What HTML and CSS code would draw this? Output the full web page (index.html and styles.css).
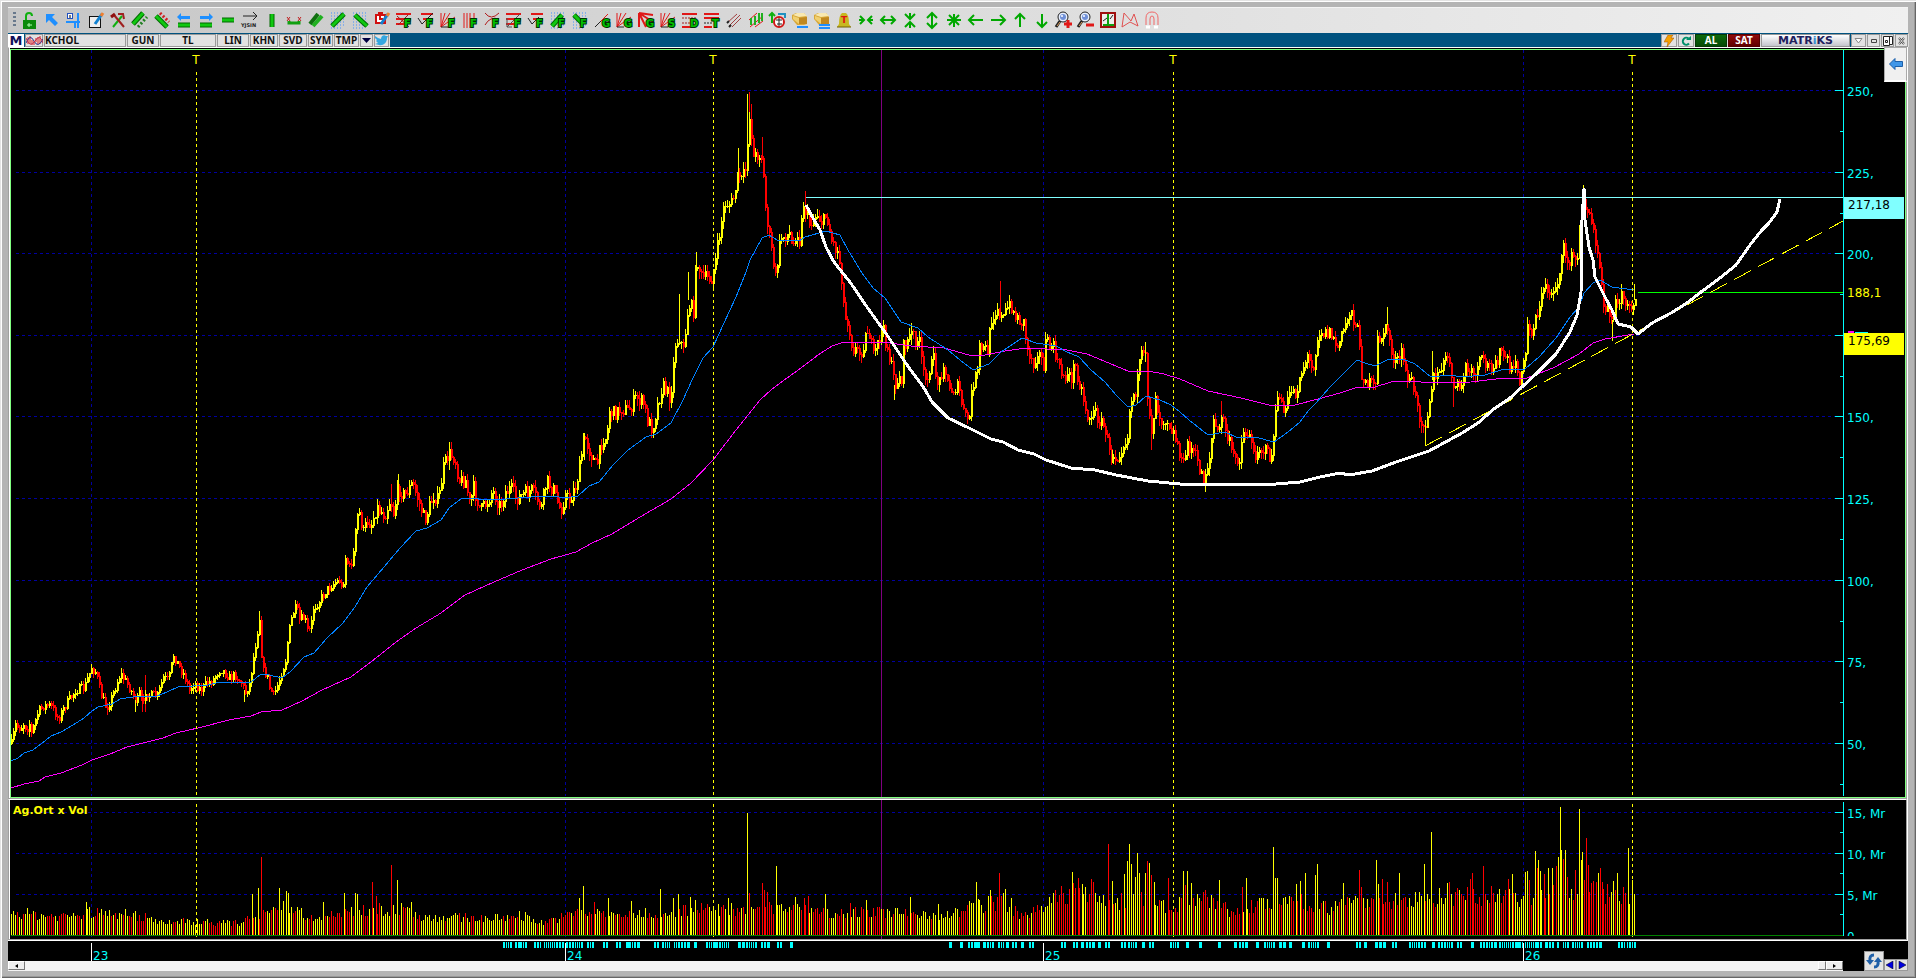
FILE: index.html
```html
<!DOCTYPE html>
<html lang="tr">

<head>
    <meta charset="UTF-8">
    <meta name="viewport" content="width=device-width, initial-scale=1.0">
    <title>KCHOL</title>
    <link rel="stylesheet" href="styles.css">
</head>

<body>
    <div class="window">
        <div class="toolbar" id="toolbar">
            <span class="grip"></span>
        </div>

        <div class="title-bar">
            <span class="logo">M</span>
            <button class="tb wave" aria-label="Indicator">
                <svg width="17" height="12" viewBox="0 0 17 12">
                    <path d="M2 2v7M4 1v8M6 5v5M8 6v4M10 3v4M12 2v7M14 1v8" stroke="#e02020" />
                    <path d="M0 8Q4 -2 8 6T17 4" fill="none" stroke="#303090" />
                    <path d="M0 3Q4 14 9 6T17 8" fill="none" stroke="#c03050" />
                </svg>
            </button>
            <button class="tb symbol">KCHOL</button>
            <button class="tb w32">GUN</button>
            <button class="tb w56">TL</button>
            <button class="tb w32">LIN</button>
            <button class="tb w28">KHN</button>
            <button class="tb w28">SVD</button>
            <button class="tb w25">SYM</button>
            <button class="tb w25">TMP</button>
            <button class="tb w13" aria-label="Template list">
                <svg width="9" height="5" viewBox="0 0 9 5"><path d="M0 0h9L4.500 5z" fill="#000040" /></svg>
            </button>
            <button class="tb w15" aria-label="Twitter">
                <svg width="13" height="11" viewBox="0 0 13 11">
                    <path d="M0 1l3 2 3 1c0-3 3-5 5-3l2-0-1 2c0 5-4 8-8 7l-4-1 3-1-2-2 1-1-2-2z" fill="#35a7e0" />
                </svg>
            </button>
            <span class="spacer"></span>
            <button class="tb w16" aria-label="Fast order">
                <svg width="10" height="12" viewBox="0 0 10 12"><path d="M4 0h5L7 3h3L3 12l1-5H0z" fill="#f5a000" stroke="#a05000" stroke-width=".5" /></svg>
            </button>
            <button class="tb w16" aria-label="Reload">
                <svg width="10" height="10" viewBox="0 0 10 10"><path d="M8 7.500A3.500 3.500 0 1 1 7.500 2.500" fill="none" stroke="#00906a" stroke-width="2" /><path d="M5 4h5V0z" fill="#00906a" /></svg>
            </button>
            <button class="tb buy">AL</button>
            <button class="tb sell">SAT</button>
            <span class="brand">MATR<i>i</i>KS</span>
            <button class="tb w15" aria-label="Menu">
                <svg width="9" height="6" viewBox="0 0 9 6"><path d="M1 .5h7L4.500 5z" fill="#fff" stroke="#888" /></svg>
            </button>
            <button class="tb w13" aria-label="Minimize">
                <svg width="6" height="5" viewBox="0 0 6 5"><path d="M.5 1.500h5v3h-5z" fill="none" stroke="#444" /></svg>
            </button>
            <button class="tb w13" aria-label="Restore">
                <svg width="10" height="10" viewBox="0 0 10 10"><path d="M4 .5h5.500v8H7M.5 .5h6v9h-6zM2.500 4.500h2v2h-2z" fill="#fff" stroke="#222" /></svg>
            </button>
            <button class="tb w13" aria-label="Close">
                <svg width="7" height="8" viewBox="0 0 7 8"><path d="M1 1l5 6M6 1L1 7" stroke="#444" stroke-width="2" /><path d="M1 1l5 6M6 1L1 7" stroke="#fff" stroke-width=".8" /></svg>
            </button>
        </div>

        <div class="panel price-panel">
            <svg class="plot" id="price-plot"></svg>
            <svg class="axis" id="price-axis"></svg>
            <button class="side-toggle" aria-label="Open side panel">
                <svg width="14" height="12" viewBox="0 0 14 12"><path d="M.5 6L6 .5v3h7.500v5H6v3z" fill="#3f96e8" stroke="#1c5fa8" /></svg>
            </button>
        </div>

        <div class="panel volume-panel">
            <svg class="plot" id="volume-plot"></svg>
            <svg class="axis clip" id="volume-axis"></svg>
        </div>

        <div class="bottom">
            <div class="time-area">
                <svg class="timeline" id="timeline"></svg>
                <div class="scrollbar">
                    <button class="scroll-btn" aria-label="Scroll left"><svg width="3" height="4"><path d="M3 0v4L0 2z" /></svg></button>
                    <span class="spacer"></span>
                    <span class="thumb"></span>
                    <button class="scroll-btn" aria-label="Scroll right"><svg width="3" height="4"><path d="M0 0v4l3-2z" /></svg></button>
                </div>
            </div>
            <div class="corner">
                <button class="sync" aria-label="Refresh">
                    <svg width="16" height="16" viewBox="0 0 16 16">
                        <path d="M8 2Q3 2 4 8M8 14q5 0 4-6" fill="none" stroke="#2060a8" stroke-width="3" />
                        <path d="M0 7h8l-4 5zM8 9h8l-4-5z" fill="#2060a8" />
                    </svg>
                </button>
                <button class="nav" aria-label="Previous"><svg width="8" height="8"><path d="M7 0v8L0 4z" fill="#0000e0" stroke="#000" stroke-width=".5" /></svg></button>
                <button class="nav" aria-label="Next"><svg width="8" height="8"><path d="M1 0v8l7-4z" fill="#0000e0" stroke="#000" stroke-width=".5" /></svg></button>
            </div>
        </div>
    </div>

    <script src="script.js"></script>
</body>

</html>
```
FILE: styles.css
```css
* {
    box-sizing: border-box;
}

body {
    margin: 0;
    background: #b4b4b4;
    font-family: "Noto Sans", "Open Sans", sans-serif;
}

button {
    margin: 0;
    padding: 0;
    border: none;
    background: none;
    font: inherit;
    color: inherit;
}

svg {
    display: block;
    flex: none;
}

.window {
    display: flex;
    flex-direction: column;
    height: 100vh;
    min-height: 600px;
    padding: 8px 8px 7px;
    background: #b4b4b4;
    box-shadow: inset 1px 1px 0 #e3e3e3, inset 2px 2px 0 #fff, inset -1px -1px 0 #666, inset -2px -2px 0 #999;
}

.spacer {
    flex: 1;
}

/* toolbar */
.toolbar {
    display: flex;
    align-items: center;
    height: 25px;
    flex: none;
    padding: 0 0 1px 5px;
    background: linear-gradient(90deg, #c6c6c6, #d8d8d8 40%, #f0f0f0);
    box-shadow: 0 -1px 0 #f4f4f4;
}

.grip {
    width: 3px;
    height: 16px;
    margin-right: 3px;
    background: repeating-linear-gradient(#68788c 0 2px, transparent 2px 4px);
}

.tool {
    flex: none;
    width: 22px;
    height: 18px;
    padding: 0 2px;
}

.tool svg {
    overflow: visible;
}

.tool text {
    font-family: "DejaVu Sans", sans-serif;
    font-weight: bold;
    font-size: 10px;
    fill: #00c000;
    stroke: #003000;
    stroke-width: 2px;
    paint-order: stroke;
}

.tool text.tiny {
    font-size: 5px;
    fill: #222;
    stroke: none;
}

.tool text.bell {
    font-size: 9px;
    fill: #e01010;
    stroke: none;
}

/* title bar */
.title-bar {
    display: flex;
    flex: none;
    gap: 1px;
    height: 14px;
    padding-top: 1px;
    background: #00527f;
    font-size: 10px;
    font-weight: bold;
    line-height: 11px;
    color: #111;
}

.logo {
    width: 16px;
    background: #fff;
    color: #101058;
    font-family: "DejaVu Sans", sans-serif;
    font-size: 13px;
    line-height: 14px;
    text-align: center;
}

.tb {
    display: flex;
    align-items: center;
    justify-content: center;
    height: 13px;
    border: 1px solid #9a9a9a;
    background: #e2e2e2;
    box-shadow: 1px 0 0 #ddd;
}

.wave {
    width: 18px;
}

.symbol {
    width: 82px;
    justify-content: flex-start;
}

.w56 {
    width: 56px;
}

.w32 {
    width: 32px;
}

.w28 {
    width: 28px;
}

.w25 {
    width: 25px;
}

.w16 {
    width: 16px;
}

.w15 {
    width: 15px;
}

.w13 {
    width: 13px;
}

.buy,
.sell {
    width: 32px;
    border-color: #063806;
    background: linear-gradient(#0c6a0c, #064a06);
    color: #fff;
}

.sell {
    border-color: #500;
    background: linear-gradient(#900a0a, #600000);
}

.brand {
    width: 89px;
    height: 13px;
    border: 1px solid #999;
    background: linear-gradient(#fff, #c4c4cc);
    color: #20205c;
    font-family: "DejaVu Sans", sans-serif;
    font-size: 11px;
    line-height: 12px;
    text-align: center;
}

.brand i {
    color: #3a90d0;
    font-style: normal;
}

/* chart panels */
.panel {
    position: relative;
    display: flex;
    margin-right: 1px;
    border: 1px solid #a0a0a0;
    border-top-color: #fff;
    background: #000;
    box-shadow: inset 1px 0 0 #fff, 1px 0 0 #fff;
}

.price-panel {
    flex: 1;
    min-height: 0;
    padding: 2px 0 0 1px;
}

.price-panel::before {
    content: "";
    position: absolute;
    inset: 1px 0 0 1px;
    border: 1px solid #80ff80;
    pointer-events: none;
}

.volume-panel {
    flex: none;
    height: 141px;
    padding-left: 1px;
}

.plot {
    flex: 1;
    width: 0;
    height: 100%;
    margin-left: 1px;
}

.axis {
    width: 63px;
    height: 100%;
    overflow: visible;
}

.axis.clip {
    height: 136px;
    margin-left: -8px;
    width: 71px;
    overflow: hidden;
}

.side-toggle {
    position: absolute;
    top: -1px;
    right: -1px;
    width: 23px;
    height: 35px;
    display: flex;
    align-items: center;
    justify-content: center;
    background: #f0f0f0;
    border: 1px solid #aaa;
    border-bottom: 2px solid #fff;
}

.plot text,
.axis text,
.timeline text {
    font-family: "DejaVu Sans", sans-serif;
    font-size: 12px;
    fill: #00ffff;
}

.plot text.marker,
.axis text.last {
    fill: #ff0;
}

.axis text.dark {
    fill: #000;
}

.plot text.caption {
    fill: #ff0;
    font-size: 11px;
    font-weight: bold;
}

.grid {
    stroke: #0000a0;
    stroke-dasharray: 3 3;
}

.session {
    stroke: #ff0;
    stroke-dasharray: 3 3;
}

.cursor {
    stroke: #800080;
}

.rise {
    stroke: #ff0;
    fill: none;
}

.fall {
    stroke: #f00;
    fill: none;
}

.ma-fast {
    stroke: #0080ff;
    fill: none;
}

.ma-slow {
    stroke: #f0f;
    fill: none;
}

.cup {
    stroke: #fff;
    stroke-width: 3;
    stroke-linejoin: round;
    fill: none;
}

.cyan {
    stroke: #0ff;
}

/* bottom strip */
.bottom {
    display: flex;
    flex: none;
    height: 31px;
    border-top: 1px solid #fff;
    background: #000;
}

.time-area {
    flex: 1;
    min-width: 0;
}

.timeline {
    width: 100%;
    height: 20px;
}

.scrollbar {
    display: flex;
    height: 10px;
    background: #f4f4f4;
}

.scroll-btn,
.thumb {
    display: flex;
    align-items: center;
    justify-content: center;
    width: 17px;
    height: 9px;
    background: #eee;
    border: 1px solid #fff;
    border-right-color: #777;
    border-bottom-color: #777;
}

.thumb {
    width: 8px;
}

.corner {
    display: flex;
    align-items: flex-end;
    width: 65px;
    padding-left: 21px;
}

.sync,
.nav {
    display: flex;
    align-items: center;
    justify-content: center;
    background: #e4e4e4;
    border: 1px solid #999;
}

.sync {
    width: 20px;
    height: 20px;
}

.nav {
    width: 12px;
    height: 12px;
}
```
FILE: script.js
```js
// ---------- toolbar icons ----------
const hatch = '<path d="M2 2h14M2 5h14M2 8h14M2 11h14M2 14h14M2 17h10" stroke="#4090ff" stroke-dasharray="1 2"/>';
const line = (d, color, width) => `<path d="${d}" fill="none" stroke="${color}" stroke-width="${width || 1}"/>`;
const bar = d => line(d, '#006800', 5) + line(d, '#10c810', 3);
const letter = c => `<text x="9" y="16">${c}</text>`;
const shape = (d, color) => `<path d="${d}" fill="${color}"/>`;
const arrow = d => line(d, '#00a800', 2);
const red = '#e01818';
const pen = line('M8 13L15 3', '#1080d0', 3) + line('M14 5L16 2', '#f08030', 3);
const rows = line('M1 3h15M1 8h15M1 13h8', red, 2);
const fan = line('M2 2v14M2 16L6 2M2 16L11 2M2 16L16 6', red) + line('M2 16h7', '#222');
const lens = '<circle cx="8" cy="6" r="5" fill="#e8f0ff" stroke="#222"/><circle cx="8" cy="6" r="3" fill="#7090d8"/><circle cx="7" cy="5" r="1" fill="#fff"/>' +
    line('M5 10L1 16', '#222', 3) + line('M5 11L2 15', '#e0a060', 1);
const cube = shape('M1 4L5 2h8l3 4v7l-3 1H6L1 8z', '#d8a838') + shape('M2 4l4-2h7l3 3-8 1z', '#f8e8b0') + shape('M8 7l8-1v7H8z', '#c08820') + shape('M2 5l6 2v6L2 8z', '#f0d070');

const icons = [
    ['Lock', line('M5 9V5Q5 2 8 2T11 5', '#10b010', 2) + shape('M2 9h13v9H2z', '#0a8a0a') + line('M8 12v4M6 14h5', '#b0ffb0')],
    ['Select', shape('M3 3h9l-3 3 6 6-3 3-6-6-3 3z', '#1e8fff')],
    ['Coordinates', line('M1 11h14M10 11v6M13 2v15', '#1e8fff', 2) + '<rect x="2.500" y="2.500" width="5" height="5" fill="#fff" stroke="#2050c0"/>' + line('M5 4v3', '#000')],
    ['Edit', '<rect x="2.500" y="5.500" width="11" height="11" fill="#eee" stroke="#111"/>' + pen],
    ['Tools', line('M4 16L13 5', '#10b010', 2) + line('M15 16L5 4M9 3h5l1 5', '#a02020', 2) + line('M2 6l4-3', '#901010', 3)],
    ['Channel up', bar('M2 13L12 2') + line('M7 16L16 6', '#208020', 3).replace('/>', ' stroke-dasharray="2 2"/>')],
    ['Channel down', bar('M3 5L14 16') + line('M7 2l9 9', '#d02020', 3).replace('/>', ' stroke-dasharray="2 2"/>')],
    ['Shift left', shape('M2 6l4-4v3h9v3H6v2z', '#1e8fff') + bar('M3 14h12')],
    ['Shift right', shape('M16 6l-4-4v3H3v3h9v2z', '#1e8fff') + bar('M3 14h12')],
    ['Horizontal line', bar('M3 9h12')],
    ['Direction', line('M2 5h14M12 1l4 4-4 4', '#222') + '<text class="tiny" x="0" y="16">YJSIN</text>'],
    ['Vertical line', bar('M9 3v13')],
    ['Range', line('M2 6l3 4M5 6l-3 4M13 6l3 4M16 6l-3 4', '#c02020') + line('M4 10v2h10v-2', '#10a010', 3)],
    ['Parallel', line('M3 13L11 3', '#107010', 4) + line('M6 15L15 5', '#20b020', 4)],
    ['Area up', hatch + bar('M3 15L15 3')],
    ['Area down', hatch + bar('M4 4L16 15')],
    ['Alarm edit', '<rect x="3" y="4" width="9" height="8" fill="#fff" stroke="#d01010" stroke-width="2"/>' + line('M5 2h5M7 5v3h3', '#d01010', 2) + pen],
    ['Fibonacci 1', rows + line('M2 5L14 16M13 4L3 14', '#a02020') + letter('F')],
    ['Fibonacci 2', line('M4 3h12M6 8h10', red, 2) + line('M1 7l4 6L16 2', '#222') + letter('F')],
    ['Fibonacci 3', fan + letter('F')],
    ['Fibonacci 4', line('M3 2v15M6 2v15M9 2v15M13 2v6', red) + letter('F')],
    ['Fibonacci 5', line('M2 2q6 8 14 0M2 14q5-9 14-6', '#b01818') + letter('F')],
    ['Fibonacci 6', rows + line('M2 16L15 3M2 7v9h5', '#555') + letter('F')],
    ['Fibonacci 7', line('M4 3h12M6 8h10', red, 2) + line('M1 7l4 6L12 6', '#222') + letter('F')],
    ['Fibonacci 8', hatch + bar('M3 15L13 4') + letter('F')],
    ['Fibonacci 9', hatch + bar('M3 4L12 13') + letter('F')],
    ['Gann line', line('M2 16L15 3', red) + line('M2 16L8 10', '#222') + letter('G')],
    ['Gann fan', fan + letter('G')],
    ['Gann fan down', line('M2 2v14M2 2l14 2M2 2l14 9M2 2l7 14', red, 2) + letter('G')],
    ['Speed lines', fan + letter('S')],
    ['Quadrant', line('M1 3h15M1 16h8', red, 2) + line('M1 7h15M1 12h8', '#a02020').replace('/>', ' stroke-dasharray="2 1"/>') + letter('D')],
    ['Tirone', line('M1 3h15M1 7h15M1 16h8', red, 2) + line('M1 12h8', '#222').replace('/>', ' stroke-dasharray="2 1"/>') + letter('T')],
    ['Regression', line('M2 12L12 3M4 15L15 4M7 16l9-9', '#a04040') + line('M2 12l2-2M4 16l2-2', '#222', 2)],
    ['Candles', line('M2 9L10 2M3 16L16 5M8 16l8-6', red) + line('M4 7v7M8 5v9M12 2v10M15 2v8', '#20b020', 2)],
    ['Point and figure', '<circle cx="10" cy="11" r="5" fill="#fff" stroke="#d01818" stroke-width="2"/>' + line('M3 12V3M0 5l3-3 3 3', '#10b010', 2) + line('M9 3h7v4', '#2090c0', 2) + line('M7 9h6M8 13h5M10 7v8', '#222')],
    ['Erase', cube + line('M6 16h11', '#1e8fff', 2)],
    ['Erase all', cube + line('M6 14h11M6 17h11', '#1e8fff', 2)],
    ['Alarm', shape('M7 2h4q3 2 3 11l2 3H2l2-3Q4 4 7 2z', '#c8b820') + line('M2 16h14', '#706000') + '<text class="bell" x="6" y="12">T</text>'],
    ['Squeeze', arrow('M2 9h5M16 9h-5M3 5l4 4-4 4M15 5l-4 4 4 4')],
    ['Widen', arrow('M2 9h14M6 5L2 9l4 4M12 5l4 4-4 4')],
    ['Flatten', arrow('M9 2v5M9 17v-5M4 3l5 5 5-5M4 16l5-5 5 5')],
    ['Stretch', arrow('M9 2v15M4 7l5-5 5 5M4 12l5 5 5-5')],
    ['Fit', arrow('M9 3v13M2 9h14M4 4l10 10M14 4L4 14')],
    ['Left', arrow('M2 9h14M7 4L2 9l5 5')],
    ['Right', arrow('M2 9h14M11 4l5 5-5 5')],
    ['Up', arrow('M9 3v13M4 8l5-5 5 5')],
    ['Down', arrow('M9 3v13M4 11l5 5 5-5')],
    ['Zoom in', lens + line('M9 13h8M13 9v8', red, 3)],
    ['Zoom out', lens + line('M9 14h8', red, 3)],
    ['Scale', '<rect x="2" y="2" width="14" height="14" fill="#eee" stroke="#a01010" stroke-width="2"/>' + line('M9 3v12M4 14h11', '#10a010', 2) + line('M4 10l4-3M11 8l3-4', '#222')],
    ['Pattern', line('M1 16L3 2l7 8 3-7 4 12-8-4z', '#e05050')],
    ['Magnet', line('M3 14V7q0-6 6-6t6 6v7M7 14V8q0-3 2-3t2 3v6', '#f06868') + line('M3 16h4M11 16h4', '#fff', 3)]
];

const toolbar = document.getElementById('toolbar');
icons.forEach(([label, body]) => {
    toolbar.insertAdjacentHTML('beforeend',
        `<button class="tool" aria-label="${label}"><svg width="18" height="18" viewBox="0 0 18 18">${body}</svg></button>`);
});

// ---------- chart data ----------
const closes = [11, 743, 15, 725, 20, 728, 24, 722, 26, 730, 29, 723, 31, 733, 37, 713, 43, 705, 50, 705, 58, 718, 65, 705, 75, 690, 84, 687,
    91, 667, 96, 673, 100, 693, 106, 708, 112, 695, 120, 673, 129, 687, 136, 702, 140, 690, 142, 710, 145, 690, 149, 695, 157, 695, 163, 677,
    168, 680, 173, 655, 179, 667, 184, 675, 189, 690, 194, 682, 200, 690, 206, 683, 212, 680, 220, 668, 229, 677, 235, 675, 241, 682, 245, 692,
    249, 683, 254, 650, 259, 618, 262, 670, 266, 673, 269, 687, 273, 695, 278, 683, 281, 672, 285, 660, 288, 633, 292, 613, 296, 607, 299, 620,
    304, 617, 307, 630, 310, 630, 313, 607, 318, 602, 324, 592, 333, 583, 339, 580, 342, 592, 345, 557, 349, 567, 354, 550, 356, 517, 359, 513,
    363, 532, 367, 520, 371, 523, 376, 507, 384, 515, 390, 498, 393, 512, 398, 488, 404, 495, 412, 483, 418, 500, 424, 520, 433, 495, 438, 500,
    443, 467, 448, 453, 454, 457, 459, 480, 465, 480, 469, 503, 473, 488, 480, 510, 486, 503, 492, 490, 500, 507, 504, 492, 510, 488, 516, 498,
    531, 490, 541, 507, 546, 480, 553, 490, 560, 510, 565, 495, 569, 500, 576, 483, 579, 467, 584, 435, 588, 447, 596, 467, 602, 437, 606, 438,
    609, 410, 613, 413, 622, 408, 628, 410, 636, 397, 643, 403, 647, 420, 652, 428, 658, 400, 662, 385, 670, 397, 675, 343, 679, 337, 683, 350,
    688, 303, 693, 310, 696, 257, 701, 277, 711, 278, 715, 260, 719, 233, 724, 203, 732, 203, 738, 173, 741, 180, 746, 167, 748, 112, 751, 133,
    753, 157, 758, 153, 762, 157, 764, 200, 769, 237, 775, 277, 780, 237, 789, 233, 792, 250, 796, 227, 799, 240, 803, 203, 809, 223, 817, 213,
    822, 223, 826, 213, 831, 240, 838, 253, 841, 277, 844, 317, 847, 320, 852, 347, 860, 353, 868, 327, 873, 357, 882, 327, 889, 357, 894, 383,
    901, 377, 903, 347, 911, 333, 919, 343, 924, 383, 928, 370, 933, 360, 938, 387, 943, 360, 948, 390, 958, 387, 964, 417, 969, 417, 972, 383,
    977, 373, 979, 347, 987, 350, 991, 317, 997, 307, 1002, 320, 1007, 307, 1011, 305, 1015, 317, 1024, 323, 1026, 347, 1033, 363, 1037, 350,
    1043, 365, 1045, 343, 1053, 347, 1060, 373, 1071, 377, 1074, 363, 1081, 390, 1087, 417, 1095, 413, 1105, 430, 1109, 453, 1117, 455,
    1124, 440, 1126, 443, 1130, 400, 1136, 387, 1140, 357, 1145, 357, 1147, 393, 1151, 430, 1155, 397, 1160, 420, 1166, 417, 1172, 430,
    1179, 450, 1182, 470, 1187, 443, 1194, 453, 1203, 480, 1209, 457, 1213, 420, 1218, 437, 1221, 413, 1227, 437, 1233, 457, 1239, 457,
    1242, 433, 1249, 433, 1253, 457, 1257, 447, 1264, 450, 1271, 457, 1274, 420, 1279, 393, 1284, 417, 1290, 387, 1295, 393, 1301, 370,
    1307, 357, 1312, 370, 1318, 330, 1330, 333, 1337, 347, 1344, 327, 1350, 308, 1357, 330, 1361, 373, 1368, 383, 1376, 387, 1377, 340,
    1387, 327, 1391, 353, 1396, 363, 1402, 353, 1405, 373, 1412, 383, 1417, 410, 1424, 425, 1428, 407, 1432, 377, 1438, 377, 1443, 360,
    1450, 363, 1453, 390, 1460, 387, 1465, 367, 1473, 377, 1480, 360, 1490, 367, 1500, 353, 1506, 357, 1510, 377, 1513, 363, 1519, 377,
    1524, 363, 1527, 327, 1532, 330, 1539, 303, 1544, 287, 1551, 293, 1558, 277, 1563, 250, 1567, 260, 1573, 257, 1578, 260, 1580, 210,
    1583, 197, 1587, 213, 1593, 230, 1599, 260, 1604, 313, 1607, 300, 1612, 325, 1616, 297, 1624, 297, 1628, 313, 1632, 303, 1635, 293];

// x, top, bottom of the long wicks
const longUp = [[747, 94, 165], [679, 294, 340], [1387, 307, 325], [1425, 420, 446], [1583, 185, 215], [1612, 320, 341], [1145, 342, 362],
    [244, 690, 702], [135, 700, 712], [259, 611, 635], [584, 433, 460], [398, 474, 500], [696, 252, 270], [911, 323, 345], [894, 385, 400],
    [1112, 450, 463], [1432, 351, 380], [1634, 284, 300], [449, 443, 470], [688, 272, 300], [738, 148, 180]];
const longDown = [[749, 92, 138], [751, 104, 139], [1000, 281, 310], [1453, 380, 407], [762, 137, 160], [805, 191, 205], [145, 675, 712],
    [142, 690, 712], [391, 484, 505], [1221, 401, 415], [451, 442, 460], [1147, 378, 400], [1151, 430, 450], [669, 395, 411]];

const fastMa = '11,761 18,758 24,753 33,750 41,744 51,736 61,732 73,725 84,718 92,711 98,707 112,704 120,699 133,697 157,696 167,692 178,687 208,685 220,682 251,682 261,674 269,675 282,678 290,672 304,657 314,653 327,638 343,623 355,607 367,587 384,567 400,548 416,531 427,528 441,520 449,508 461,499 473,498 484,500 506,499 531,497 553,496 565,498 578,496 589,486 599,482 613,465 628,450 646,437 656,434 671,423 683,400 693,378 703,358 713,347 724,323 736,297 746,272 750,260 762,238 769,235 777,240 799,241 805,237 826,231 840,235 848,250 862,273 873,288 885,298 901,322 918,328 928,337 948,350 960,360 973,370 989,364 1001,352 1022,338 1036,343 1056,346 1067,352 1079,357 1091,370 1105,382 1116,395 1128,407 1136,405 1146,396 1160,400 1171,405 1180,412 1189,420 1208,435 1225,432 1236,437 1255,437 1274,442 1288,432 1300,422 1309,410 1316,403 1330,387 1342,375 1357,360 1365,363 1375,366 1389,359 1403,359 1415,364 1431,377 1450,375 1462,377 1485,375 1504,369 1525,369 1539,357 1556,338 1570,317 1579,307 1584,293 1593,283 1600,280 1612,287 1634,290';
const slowMa = '11,788 24,784 39,781 45,777 61,773 82,765 92,760 110,754 127,747 163,738 176,733 198,728 229,720 251,716 261,712 282,710 302,701 322,690 351,677 376,658 396,642 416,628 441,613 465,595 494,582 522,570 551,559 576,552 592,543 612,534 640,517 671,499 691,483 713,460 736,430 760,400 771,390 787,378 801,368 818,355 832,346 844,342 883,342 911,346 944,348 969,355 985,355 1005,351 1026,348 1067,350 1087,354 1111,364 1128,371 1148,371 1164,374 1180,379 1208,391 1241,398 1269,405 1295,405 1318,399 1340,393 1358,387 1375,387 1391,382 1412,381 1429,383 1471,382 1504,378 1527,378 1553,368 1579,354 1593,343 1605,339 1634,334';
const cup = '806,205 813,218 820,230 826,247 834,262 850,282 867,307 887,335 907,365 924,388 932,402 948,418 969,428 991,439 1003,442 1018,450 1034,454 1046,460 1071,468 1095,470 1116,475 1148,481 1180,484 1276,484 1300,482 1320,477 1340,473 1349,475 1372,471 1396,462 1429,451 1462,433 1478,423 1495,408 1509,399 1537,373 1556,354 1570,332 1577,315 1581,293 1582,220 1584,189 1585,220 1589,247 1593,260 1595,277 1605,297 1612,310 1618,324 1631,327 1638,334 1652,323 1671,313 1687,303 1701,292 1720,278 1736,265 1750,245 1762,230 1769,223 1777,212 1780,199';

const volumeBase = [11, 22, 60, 18, 90, 22, 130, 20, 160, 13, 200, 13, 240, 11, 250, 22, 270, 20, 290, 30, 310, 16, 340, 20, 360, 24, 400, 25,
    420, 18, 500, 16, 520, 20, 540, 12, 580, 22, 620, 20, 700, 25, 800, 27, 830, 22, 900, 22, 950, 20, 970, 27, 1000, 32, 1020, 20, 1040, 24,
    1060, 40, 1090, 44, 1110, 32, 1150, 35, 1170, 26, 1200, 38, 1232, 22, 1260, 30, 1300, 33, 1330, 26, 1350, 33, 1400, 34, 1450, 38,
    1500, 38, 1520, 32, 1540, 46, 1570, 46, 1600, 42, 1620, 38, 1636, 38];
// x, height, 1 = rise / 0 = fall
const volumePeaks = [[86, 33, 1], [135, 24, 1], [145, 22, 0], [252, 41, 1], [258, 47, 1], [261, 78, 0], [279, 47, 1], [286, 44, 1], [288, 42, 1],
    [323, 33, 1], [344, 42, 1], [355, 42, 1], [357, 41, 1], [372, 53, 0], [376, 39, 0], [391, 70, 0], [397, 55, 1], [411, 33, 1], [579, 37, 1],
    [583, 49, 1], [594, 33, 0], [608, 37, 1], [631, 34, 1], [660, 46, 1], [673, 37, 1], [678, 41, 1], [690, 38, 1], [695, 35, 1], [701, 32, 0],
    [718, 31, 1], [728, 37, 1], [747, 122, 1], [749, 42, 0], [762, 52, 0], [764, 45, 0], [767, 43, 0], [776, 69, 1], [795, 38, 1], [804, 37, 0],
    [808, 39, 0], [825, 41, 1], [850, 32, 0], [866, 35, 1], [910, 38, 1], [938, 31, 1], [971, 32, 1], [976, 53, 1], [978, 36, 1], [988, 39, 1],
    [990, 45, 1], [999, 62, 0], [1003, 42, 1], [1005, 46, 1], [1011, 37, 1], [1072, 63, 1], [1078, 57, 0], [1082, 51, 1], [1108, 91, 0],
    [1112, 54, 1], [1124, 61, 1], [1127, 74, 1], [1129, 91, 1], [1131, 71, 1], [1135, 58, 1], [1137, 82, 1], [1139, 62, 1], [1145, 62, 1],
    [1147, 74, 0], [1149, 72, 1], [1151, 60, 0], [1154, 53, 1], [1168, 57, 0], [1183, 64, 1], [1185, 50, 0], [1187, 64, 1], [1191, 52, 1],
    [1219, 55, 1], [1242, 48, 0], [1246, 57, 1], [1273, 88, 1], [1275, 57, 1], [1277, 57, 1], [1296, 51, 1], [1300, 54, 1], [1305, 62, 1],
    [1315, 60, 1], [1317, 71, 1], [1343, 52, 1], [1359, 65, 0], [1361, 48, 0], [1376, 75, 1], [1378, 51, 1], [1382, 56, 0], [1387, 53, 0],
    [1399, 62, 1], [1424, 71, 1], [1431, 103, 1], [1447, 52, 1], [1449, 53, 0], [1470, 56, 0], [1472, 62, 0], [1483, 69, 0], [1508, 56, 0],
    [1512, 61, 1], [1525, 63, 1], [1527, 64, 1], [1529, 55, 0], [1535, 84, 1], [1537, 67, 0], [1538, 75, 1], [1540, 64, 1], [1544, 61, 0],
    [1548, 67, 1], [1552, 67, 1], [1556, 69, 0], [1558, 78, 1], [1560, 128, 1], [1561, 85, 1], [1563, 76, 0], [1565, 85, 1], [1567, 58, 0],
    [1575, 65, 0], [1579, 126, 1], [1581, 75, 1], [1582, 83, 1], [1584, 55, 0], [1586, 97, 0], [1588, 70, 0], [1596, 53, 0], [1598, 62, 1],
    [1600, 67, 0], [1602, 53, 0], [1613, 54, 1], [1617, 62, 1], [1628, 87, 1], [1632, 55, 1], [1634, 41, 1]];

// news marks on the time line, "x" or "x:width"
const marks = '503:2 506 508 510:2 515:2 518:4 523 525:2 534:2 537:2 540 544 546 548 550 552 554 556:2 559:2 562:2 566:2 569:2 572:2 575 577 579 581:2 587:2 590 592:2 603:2 606:2 616:2 619:2 626:5 632 634:2 637:3 654:2 657:2 662:2 665 667 669 674 676 678:2 681:2 684:2 687:3 694:3 706:2 709 711 713:5 719:2 722 724 726 728 738:3 742:3 746:2 749 751 753 755:2 761:2 764:2 767:3 777:2 780:2 790:3 949:3 960:3 968:2 971:2 974:6 983:3 987:2 990 992:2 998:2 1001 1003 1006:3 1012:2 1015:2 1021:3 1029:2 1032:2 1061:2 1064:2 1073:2 1076:2 1081:3 1086:2 1089:2 1092:3 1098:3 1105:2 1108:2 1121:2 1124:2 1128:2 1131 1133 1135:2 1142:3 1149:2 1152:2 1170:2 1173 1175 1177:2 1186:3 1199:3 1218:3 1234:3 1239:2 1242:2 1245:3 1256:3 1264:2 1267 1269 1271 1273:2 1279:3 1283:3 1289:3 1302:3 1308:2 1311 1313 1315 1317:2 1327:3 1356:2 1359:2 1364:3 1375:3 1379:3 1383:3 1392:2 1395:2 1409:2 1412 1414 1416 1418:2 1421:2 1424:2 1432:3 1438:2 1441:2 1444:2 1447 1449 1451:2 1457:2 1460:2 1471:3 1480:2 1483:2 1486:2 1489 1491:2 1494:3 1499:2 1502 1504 1506 1508 1510 1512:2 1515:6 1522 1525 1527 1529 1531 1533 1535:4 1540:2 1545:3 1549:2 1552:2 1557:2 1563 1565 1567:2 1572:2 1575 1577 1579 1581:2 1587:2 1590:2 1593:2 1596:2 1599:3 1618:2 1621:2 1624 1627 1629:2 1632 1634:2';

const years = [[91, '23'], [565, '24'], [1043, '25'], [1523, '26']];
const sessions = [196, 713, 1173, 1632];
const cursorX = 881;

// ---------- helpers ----------
let seed = 7;
function rnd() {
    seed = (seed * 16807) % 2147483647;
    return seed / 2147483647;
}

function valueAt(list, x) {
    for (let i = 2; i < list.length; i += 2) {
        if (x <= list[i]) {
            const t = (x - list[i - 2]) / (list[i] - list[i - 2]);
            return list[i - 1] + (list[i + 1] - list[i - 1]) * t;
        }
    }
    return list[list.length - 1];
}

const vline = (x, y1, y2) => `M${x + 0.5} ${Math.round(y1)}V${Math.round(y2)}`;
const hline = (y, x1, x2) => `M${x1} ${y + 0.5}H${x2}`;
const path = (cls, d) => `<path class="${cls}" d="${d}" shape-rendering="crispEdges"/>`;
const poly = (cls, points) => `<polyline class="${cls}" points="${points}" shape-rendering="crispEdges"/>`;

function draw(id, dx, dy, body) {
    document.getElementById(id).innerHTML = `<g transform="translate(${-dx} ${-dy})">${body}</g>`;
}

// ---------- price ----------
const levels = [[250, 90], [225, 172], [200, 253], [175, 335], [150, 416], [125, 498], [100, 580], [75, 661], [50, 743]];

let rise = '';
let fall = '';
let open = closes[1];
for (let x = 11; x <= 1635; x += 2) {
    // swings get wider as the price grows
    const swing = x < 350 ? 9 : 14;
    const close = valueAt(closes, x) + (rnd() - 0.5) * swing;
    const top = Math.min(open, close);
    const bottom = Math.max(open, close) + 1;
    const wick = vline(x, top - rnd() * swing / 2, bottom + rnd() * swing / 2);
    const body = vline(x + 1, top, bottom);
    if (close <= open) {
        rise += wick + body;
    } else {
        fall += wick + body;
    }
    open = close;
}
longUp.forEach(w => rise += vline(...w));
longDown.forEach(w => fall += vline(...w));

draw('price-plot', 11, 50,
    path('grid', levels.map(l => hline(l[1], 16, 1843)).join('') + years.map(y => vline(y[0], 50, 796)).join('')) +
    path('cursor', vline(cursorX, 50, 797)) +
    path('fall', fall) + path('rise', rise) +
    poly('ma-slow', slowMa) + poly('ma-fast', fastMa) +
    path('session', sessions.map(x => vline(x, 72, 796)).join('')) +
    sessions.map(x => `<text class="marker" x="${x}" y="64" text-anchor="middle">T</text>`).join('') +
    '<path d="M806 197.500H1843" stroke="#80ffff"/><path d="M1638 292.500H1843" stroke="#00ff00"/>' +
    '<path d="M1425 446L1843 221" stroke="#ffff00" stroke-dasharray="19 8" shape-rendering="crispEdges"/>' +
    poly('cup', cup));

draw('price-axis', 1843, 50,
    path('cyan', vline(1843, 50, 796) + levels.map(l => hline(l[1], 1835, 1843) + hline(l[1] + 41, 1840, 1843)).join('')) +
    levels.filter(l => l[0] !== 175).map(l => `<text x="1847" y="${l[1] + 6}">${l[0]},</text>`).join('') +
    '<path d="M1855 332.500H1868" stroke="#00ffff"/><path d="M1848 332h6" stroke="#ff00ff" stroke-width="2"/>' +
    '<text class="last" x="1847" y="297">188,1</text>' +
    '<rect x="1844" y="197" width="60" height="22" fill="#80ffff"/><text class="dark" x="1848" y="209">217,18</text>' +
    '<rect x="1844" y="333" width="60" height="22" fill="#ffff00"/><text class="dark" x="1848" y="345">175,69</text>');

// ---------- volume ----------
const volumes = { 0: '', 1: '' };
const peaks = {};
volumePeaks.forEach(p => peaks[p[0]] = p);
let side = 1;
for (let x = 11; x <= 1634; x += 2) {
    if (rnd() < 0.35) side = 1 - side;
    if (peaks[x] || peaks[x + 1]) continue;
    volumes[side] += vline(x, 935 - valueAt(volumeBase, x) * (0.75 + rnd() * 0.55), 935);
}
volumePeaks.forEach(p => volumes[p[2]] += vline(p[0], 935 - p[1], 935));

const amounts = [[15, 812], [10, 853], [5, 894]];
draw('volume-plot', 11, 800,
    path('grid', amounts.map(a => hline(a[1], 16, 1843)).join('') + years.map(y => vline(y[0], 802, 937)).join('')) +
    path('session', sessions.map(x => vline(x, 804, 937)).join('')) +
    path('cursor', vline(cursorX, 800, 939)) +
    path('fall', volumes[0]) + path('rise', volumes[1]) +
    '<path d="M11 935.500H1843" stroke="#008000"/>' +
    '<text class="caption" x="13" y="814">Ag.Ort x Vol</text>');

draw('volume-axis', 1835, 800,
    path('cyan', vline(1843, 802, 936) + amounts.map(a => hline(a[1], 1835, 1843) + hline(a[1] + 20, 1840, 1843)).join('')) +
    amounts.map(a => `<text x="1847" y="${a[1] + 6}">${a[0]}, Mr</text>`).join('') +
    '<text x="1847" y="941">0</text>');

// ---------- time line ----------
const markRects = marks.split(' ').map(m => {
    const [x, w] = m.split(':');
    return `<rect x="${x}" y="942" width="${w || 1}" height="6" fill="#00ffff"/>`;
}).join('');

draw('timeline', 8, 941, markRects +
    years.map(y => `<path d="${vline(y[0], 943, 961)}" stroke="#fff"/><text x="${y[0] + 2}" y="960">${y[1]}</text>`).join(''));
```
